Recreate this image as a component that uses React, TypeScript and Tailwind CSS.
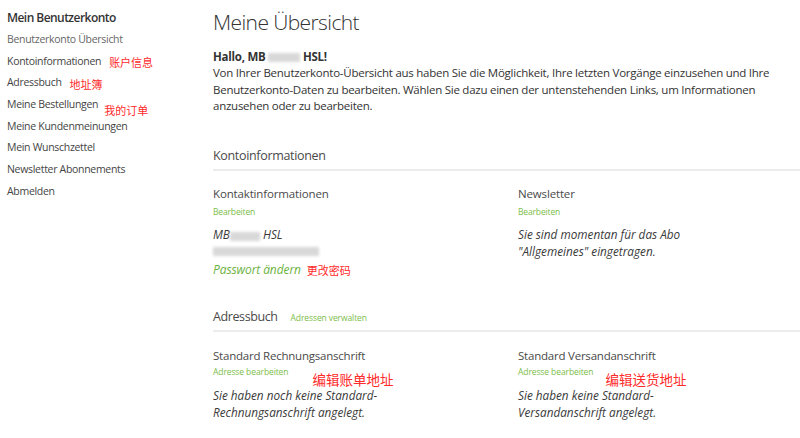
const navItems = [
  { label: "Benutzerkonto Übersicht" },
  { label: "Kontoinformationen", note: "账户信息", noteClass: "ml-[8px] mt-[1px]" },
  { label: "Adressbuch", note: "地址簿", noteClass: "ml-[8px] mt-[2px]" },
  { label: "Meine Bestellungen", note: "我的订单", noteClass: "ml-[6px] mt-[11px]" },
  { label: "Meine Kundenmeinungen" },
  { label: "Mein Wunschzettel" },
  { label: "Newsletter Abonnements" },
  { label: "Abmelden" },
];

const Blur = ({ w }: { w: number }) => (
  <span
    className="inline-block h-[9px] align-middle bg-[#cfcfcf] blur-[1.5px] opacity-80"
    style={{ width: w }}
  />
);

const Note = ({ children, className = "" }: { children: React.ReactNode; className?: string }) => (
  <span className={`text-[#ff2a2a] font-['Noto_Sans_CJK_SC',sans-serif] tracking-normal ${className}`}>{children}</span>
);

export default function App() {
  return (
    <div className="w-[800px] h-[438px] overflow-hidden bg-white flex font-['Open_Sans',sans-serif] text-[#333]">
      {/* Sidebar */}
      <aside className="w-[213px] shrink-0 pl-[7px] pt-[8px]">
        <div className="text-[12px] leading-[20px] font-semibold tracking-[-0.55px] text-[#333] mb-[1px]">Mein Benutzerkonto</div>
        <ul>
          {navItems.map((item) => (
            <li key={item.label} className="h-[21.7px] flex items-center text-[10.5px] tracking-[-0.3px] text-[#444]">
              <span className={item.label === "Benutzerkonto Übersicht" ? "text-[#666]" : ""}>{item.label}</span>
              {item.note && <Note className={`text-[11px] ${item.noteClass}`}>{item.note}</Note>}
            </li>
          ))}
        </ul>
      </aside>

      {/* Main */}
      <main className="flex-1 pt-[8px]">
        <h1 className="text-[21px] leading-[28px] font-light tracking-[-0.6px] text-[#333]">Meine Übersicht</h1>
        <p className="mt-[12.75px] text-[11.5px] leading-[16.5px] font-bold tracking-[-0.25px] text-[#333]">
          Hallo, MB <Blur w={32} /> HSL!
        </p>
        <p className="text-[11.5px] leading-[16.5px] tracking-[-0.25px] text-[#333] pr-[20px]">
          Von Ihrer Benutzerkonto-Übersicht aus haben Sie die Möglichkeit, Ihre letzten Vorgänge einzusehen und Ihre
          Benutzerkonto-Daten zu bearbeiten. Wählen Sie dazu einen der untenstehenden Links, um Informationen
          anzusehen oder zu bearbeiten.
        </p>

        {/* Kontoinformationen */}
        <div className="mt-[31px] pb-[3px] border-b-2 border-[#ececec]">
          <h2 className="text-[12.5px] leading-[20px] tracking-[-0.33px] text-[#4a4a4a]">Kontoinformationen</h2>
        </div>
        <div className="grid grid-cols-[305px_1fr] mt-[14px]">
          <div>
            <h3 className="text-[11.5px] leading-[18px] tracking-[-0.15px] text-[#4a4a4a]">Kontaktinformationen</h3>
            <div className="mt-[2px] text-[8.5px] leading-[14px] tracking-[-0.15px] text-[#7cbd4a]">Bearbeiten</div>
            <div className="mt-[7.5px] text-[11.75px] leading-[17px] italic text-[#3a3a3a]">
              MB<Blur w={30} /> HSL
            </div>
            <div className="h-[17px] flex items-center">
              <Blur w={106} />
            </div>
            <div className="text-[12px] leading-[17px] italic tracking-[-0.1px] text-[#6cb33f] flex items-center">
              Passwort ändern
              <Note className="not-italic text-[11px] ml-[6px] mt-[2px]">更改密码</Note>
            </div>
          </div>
          <div>
            <h3 className="text-[11.5px] leading-[18px] tracking-[-0.15px] text-[#4a4a4a]">Newsletter</h3>
            <div className="mt-[2px] text-[8.5px] leading-[14px] tracking-[-0.15px] text-[#7cbd4a]">Bearbeiten</div>
            <div className="mt-[7.5px] text-[11.75px] leading-[17px] italic text-[#3a3a3a]">
              Sie sind momentan für das Abo
              <br />
              "Allgemeines" eingetragen.
            </div>
          </div>
        </div>

        {/* Adressbuch */}
        <div className="mt-[27.5px] pb-[3px] border-b-2 border-[#ececec] flex items-baseline">
          <h2 className="text-[12.5px] leading-[20px] tracking-[-0.4px] text-[#4a4a4a]">Adressbuch</h2>
          <span className="ml-[13px] text-[8.5px] tracking-[-0.1px] text-[#7cbd4a]">Adressen verwalten</span>
        </div>
        <div className="grid grid-cols-[305px_1fr] mt-[15px]">
          <div>
            <h3 className="text-[11.5px] leading-[18px] tracking-[-0.22px] text-[#4a4a4a]">Standard Rechnungsanschrift</h3>
            <div className="mt-[1px] h-[14px] flex items-center text-[8.5px] tracking-[-0.1px] text-[#7cbd4a]">
              Adresse bearbeiten
              <Note className="text-[13.5px] ml-[24px] mt-[12px]">编辑账单地址</Note>
            </div>
            <div className="mt-[7.5px] text-[11.75px] leading-[17px] italic text-[#3a3a3a]">
              Sie haben noch keine Standard-
              <br />
              Rechnungsanschrift angelegt.
            </div>
          </div>
          <div>
            <h3 className="text-[11.5px] leading-[18px] tracking-[-0.22px] text-[#4a4a4a]">Standard Versandanschrift</h3>
            <div className="mt-[1px] h-[14px] flex items-center text-[8.5px] tracking-[-0.1px] text-[#7cbd4a]">
              Adresse bearbeiten
              <Note className="text-[13.5px] ml-[12px] mt-[12px]">编辑送货地址</Note>
            </div>
            <div className="mt-[7.5px] text-[11.75px] leading-[17px] italic text-[#3a3a3a]">
              Sie haben keine Standard-
              <br />
              Versandanschrift angelegt.
            </div>
          </div>
        </div>
      </main>
    </div>
  );
}
